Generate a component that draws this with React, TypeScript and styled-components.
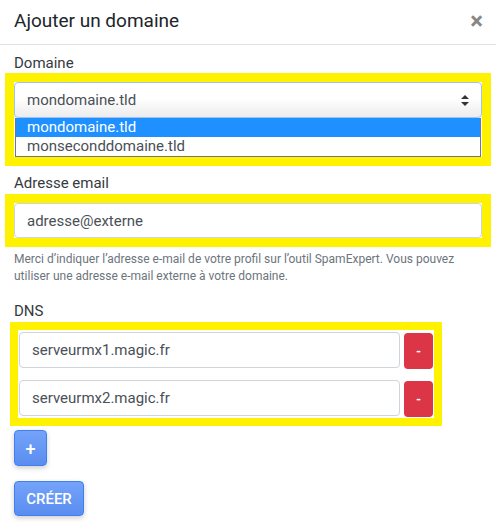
import React from "react";
import styled, { createGlobalStyle } from "styled-components";

const GlobalStyle = createGlobalStyle`
    body {
        margin: 0;
        background: #fff;
        font-family: Roboto, "Liberation Sans", sans-serif;
        color: #212529;
    }
`;

// Styles
const Modal = styled.div`
    width: 496px;
    height: 528px;
    background: #fff;
    overflow: hidden;
`;

const Header = styled.div`
    height: 44px;
    border-bottom: 1px solid #dee2e6;
    display: flex;
    align-items: center;
    justify-content: space-between;
    padding: 0 14px;
`;

const Title = styled.h5`
    margin: 0;
    font-size: 19px;
    font-weight: 400;
    line-height: 22px;
    color: #212529;
    margin-top: -2px;
`;

const Close = styled.span`
    font-size: 24px;
    font-weight: 700;
    line-height: 1;
    color: #878787;
    margin-top: -3px;
    margin-right: -1px;
`;

const Body = styled.div`
    padding: 9px 14px 0;
`;

const Group = styled.div<{ $top?: number }>`
    margin-top: ${(p) => p.$top ?? 0}px;
`;

const Label = styled.label<{ $gap?: number }>`
    display: block;
    font-size: 15px;
    line-height: 18px;
    color: #343a40;
    margin-bottom: ${(p) => p.$gap ?? 2}px;
`;

const Highlight = styled.div`
    margin: 0 -9px;
    border: 9px solid #fff200;
    background: #fff;
`;

const SelectBox = styled.div`
    height: 36px;
    box-sizing: border-box;
    border: 1px solid #9fc3f5;
    border-radius: 4px;
    background: linear-gradient(#fff 0%, #fff 45%, #ececec 100%);
    display: flex;
    align-items: center;
    justify-content: space-between;
    padding: 0 12px;
    font-size: 15px;
    color: #495057;
`;

const OptionList = styled.div`
    border: 1px solid #767676;
    border-top: none;
    margin: 0 1px;
`;

const Option = styled.div<{ $active?: boolean }>`
    height: 19px;
    line-height: 19px;
    padding-left: 11px;
    font-size: 15px;
    background: ${(p) => (p.$active ? "#1e90ff" : "#fff")};
    color: ${(p) => (p.$active ? "#fff" : "#495057")};
`;

const Input = styled.div<{ $h?: number }>`
    flex: 1;
    height: ${(p) => p.$h ?? 35}px;
    box-sizing: border-box;
    border: 1px solid #ced4da;
    border-radius: 4px;
    display: flex;
    align-items: center;
    padding: 0 12px;
    font-size: 15px;
    color: #495057;
    background: #fff;
`;

const Help = styled.small`
    display: block;
    margin-top: 4px;
    font-size: 12px;
    line-height: 17px;
    color: #6c757d;
`;

const DnsHighlight = styled.div`
    width: 432px;
    box-sizing: border-box;
    margin-left: -4px;
    border: 8px solid #fff200;
    background: #fff;
    padding: 2px 1px 1px;
    display: flex;
    flex-direction: column;
    gap: 11px;
`;

const DnsRow = styled.div`
    display: flex;
    gap: 4px;
`;

const RemoveButton = styled.button`
    width: 29px;
    height: 36px;
    margin-top: 1px;
    border: none;
    border-radius: 4px;
    background: #dc3545;
    color: #fff;
    font-family: inherit;
    font-size: 13px;
    font-weight: 700;
    padding: 0;
`;

const BlueButton = styled.button<{ $w: number; $h: number; $top: number; $size: number }>`
    display: block;
    width: ${(p) => p.$w}px;
    height: ${(p) => p.$h}px;
    margin-top: ${(p) => p.$top}px;
    border: 1px solid #3f80f0;
    border-radius: 4px;
    background: linear-gradient(#74a3f9, #5a8df0);
    box-shadow: 0 2px 5px rgba(0, 0, 0, 0.2);
    color: #fff;
    font-family: inherit;
    font-size: ${(p) => p.$size}px;
    font-weight: 500;
    padding: 0;
`;

function Arrows() {
    return (
        <svg width="8" height="11" viewBox="0 0 8 11">
            <path d="M4 0 L8 4 L0 4 Z" fill="#333" />
            <path d="M0 7 L8 7 L4 11 Z" fill="#333" />
        </svg>
    );
}

export default function App() {
    return (
        <Modal>
            <GlobalStyle />
            <Header>
                <Title>Ajouter un domaine</Title>
                <Close>×</Close>
            </Header>
            <Body>
                <Group>
                    <Label $gap={1}>Domaine</Label>
                    <Highlight>
                        <SelectBox>
                            <span>mondomaine.tld</span>
                            <Arrows />
                        </SelectBox>
                        <OptionList>
                            <Option $active>mondomaine.tld</Option>
                            <Option>monseconddomaine.tld</Option>
                        </OptionList>
                    </Highlight>
                </Group>
                <Group $top={8}>
                    <Label>Adresse email</Label>
                    <Highlight>
                        <Input>adresse@externe</Input>
                    </Highlight>
                    <Help>
                        Merci d’indiquer l’adresse e-mail de votre profil sur l’outil SpamExpert. Vous pouvez
                        utiliser une adresse e-mail externe à votre domaine.
                    </Help>
                </Group>
                <Group $top={17}>
                    <Label>DNS</Label>
                    <DnsHighlight>
                        <DnsRow>
                            <Input $h={36}>serveurmx1.magic.fr</Input>
                            <RemoveButton>-</RemoveButton>
                        </DnsRow>
                        <DnsRow>
                            <Input $h={36}>serveurmx2.magic.fr</Input>
                            <RemoveButton>-</RemoveButton>
                        </DnsRow>
                    </DnsHighlight>
                </Group>
                <BlueButton $w={33} $h={36} $top={4} $size={18}>+</BlueButton>
                <BlueButton $w={70} $h={35} $top={15} $size={15}>CRÉER</BlueButton>
            </Body>
        </Modal>
    );
}
